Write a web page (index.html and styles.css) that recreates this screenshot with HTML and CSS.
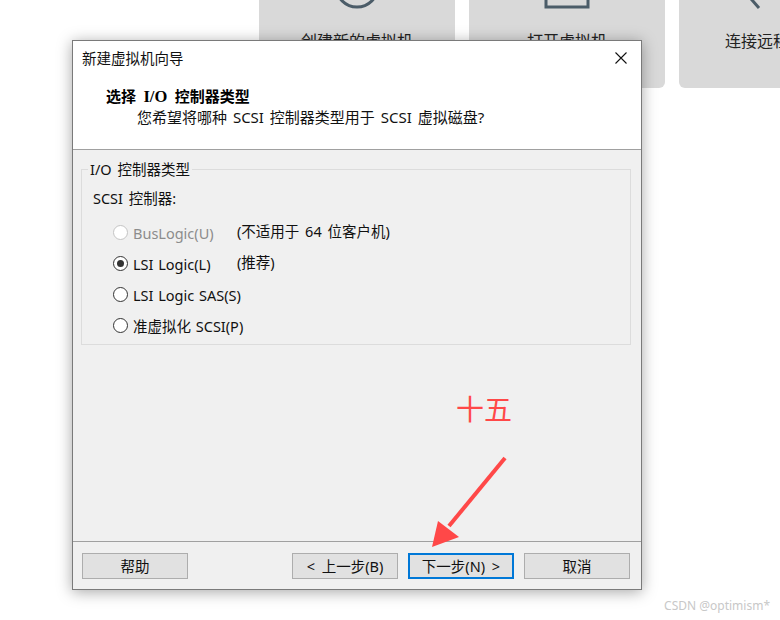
FILE: index.html
```html
<!DOCTYPE html>
<html lang="zh-CN">
<head>
<meta charset="utf-8">
<title>新建虚拟机向导</title>
<link rel="stylesheet" href="styles.css">
</head>
<body>
<div class="home">
  <div class="tile">
    <svg class="tile-icon" width="48" height="48" viewBox="0 0 48 48"><circle cx="24" cy="24" r="21" fill="none" stroke="#4b5c68" stroke-width="3"/></svg>
    <span class="tile-label">创建新的虚拟机</span>
  </div>
  <div class="tile">
    <svg class="tile-icon" width="48" height="48" viewBox="0 0 48 48"><rect x="3" y="3" width="42" height="42" fill="none" stroke="#4b5c68" stroke-width="3"/></svg>
    <span class="tile-label">打开虚拟机</span>
  </div>
  <div class="tile">
    <svg class="tile-icon" width="48" height="48" viewBox="0 0 48 48"><path d="M-8 30 L6 46" fill="none" stroke="#4b5c68" stroke-width="3"/></svg>
    <span class="tile-label">连接远程</span>
  </div>
</div>

<div class="dialog">
  <div class="titlebar">
    <span class="title">新建虚拟机向导</span>
    <svg class="close" width="12" height="12" viewBox="0 0 12 12"><path d="M0.5 0.5 L11.5 11.5 M11.5 0.5 L0.5 11.5" stroke="#111" stroke-width="1.1" fill="none"/></svg>
  </div>
  <div class="header">
    <div class="heading">选择 <span class="serif">I/O</span> 控制器类型</div>
    <div class="subtitle">您希望将哪种 SCSI 控制器类型用于 SCSI 虚拟磁盘?</div>
  </div>
  <div class="body">
    <fieldset class="group">
      <legend>I/O 控制器类型</legend>
      <div class="group-inner">
        <div class="caption">SCSI 控制器:</div>
        <div class="option disabled">
          <span class="radio"></span>
          <span class="opt-label">BusLogic(U)</span>
          <span class="opt-note">(不适用于 64 位客户机)</span>
        </div>
        <div class="option">
          <span class="radio checked"></span>
          <span class="opt-label">LSI Logic(L)</span>
          <span class="opt-note">(推荐)</span>
        </div>
        <div class="option">
          <span class="radio"></span>
          <span class="opt-label">LSI Logic SAS(S)</span>
        </div>
        <div class="option">
          <span class="radio"></span>
          <span class="opt-label">准虚拟化 SCSI(P)</span>
        </div>
      </div>
    </fieldset>
  </div>
  <div class="footer">
    <button class="btn">帮助</button>
    <span class="spacer"></span>
    <button class="btn">&lt; 上一步(B)</button>
    <button class="btn focused">下一步(N) &gt;</button>
    <button class="btn">取消</button>
  </div>
</div>

<div class="annotation">十五</div>
<svg class="arrow" width="90" height="100" viewBox="0 0 90 100">
  <path d="M80 8 L24 76" stroke="#ff4848" stroke-width="4" fill="none" stroke-linecap="butt"/>
  <path d="M7 97 L13 71 L34 87 Z" fill="#ff4848"/>
</svg>

<div class="watermark">CSDN @optimism*</div>
</body>
</html>
```

FILE: styles.css
```css
* { box-sizing: border-box; }

html, body {
  margin: 0;
  padding: 0;
}

body {
  width: 780px;
  height: 620px;
  overflow: hidden;
  background: #ffffff;
  position: relative;
  font-family: "Noto Sans", "Noto Sans CJK SC", sans-serif;
  color: #000;
}

/* background home tiles */
.home {
  display: flex;
  gap: 14px;
  margin-top: -110px;
  margin-left: 259px;
}

.tile {
  flex: 0 0 196px;
  height: 198px;
  background: #d9d9d9;
  border-radius: 6px;
  display: flex;
  flex-direction: column;
  align-items: center;
  justify-content: flex-end;
  padding-bottom: 38px;
}

.tile-icon {
  display: block;
  margin-bottom: 20px;
  overflow: visible;
}

.tile-label {
  font-family: "Noto Sans CJK SC", sans-serif;
  font-size: 16px;
  line-height: 20px;
  color: #222;
  white-space: nowrap;
}

.tile:last-child .tile-label {
  align-self: flex-start;
  margin-left: 46px;
}

/* dialog window */
.dialog {
  position: absolute;
  left: 72px;
  top: 40px;
  width: 570px;
  height: 550px;
  border: 1px solid #7a7a7a;
  background: #f0f0f0;
  box-shadow: 0 2px 14px rgba(0, 0, 0, 0.35);
  display: flex;
  flex-direction: column;
  font-family: "Noto Sans", "Noto Sans CJK SC", sans-serif;
  font-size: 14.5px;
}

.titlebar {
  height: 34px;
  background: #fff;
  display: flex;
  align-items: center;
  justify-content: space-between;
  padding: 0 14px 0 9px;
}

.title {
  font-family: "Noto Sans CJK SC", sans-serif;
  font-size: 14.5px;
  line-height: 20px;
  color: #111;
}

.close {
  display: block;
}

.header {
  height: 75px;
  background: #fff;
  border-bottom: 1px solid #a0a0a0;
  padding-top: 10px;
}

.heading {
  margin-left: 33px;
  font-family: "Noto Sans CJK SC", sans-serif;
  font-weight: 700;
  font-size: 15px;
  line-height: 21px;
  word-spacing: 4px;
}

.serif {
  font-family: "Liberation Serif", serif;
  font-size: 16.5px;
}

.subtitle {
  margin-left: 64px;
  font-size: 15px;
  line-height: 21px;
  word-spacing: 2px;
  color: #111;
}

.body {
  flex: 1;
  padding: 9px 10px 0 8px;
}

.group {
  margin: 0;
  border: 1px solid #dcdcdc;
  padding: 0 8px 3px 6px;
  min-width: 0;
}

.group legend {
  padding: 0 2px;
  font-size: 14.5px;
  line-height: 20px;
  word-spacing: 2px;
  color: #111;
}

.group-inner {
  padding-top: 9px;
}

.caption {
  margin-left: 5px;
  line-height: 20px;
  margin-bottom: 9px;
  word-spacing: 2px;
  color: #111;
}

.option {
  display: flex;
  align-items: center;
  height: 31px;
  padding-left: 25px;
  color: #111;
}

.radio {
  flex: 0 0 15px;
  width: 15px;
  height: 15px;
  border: 1px solid #333;
  border-radius: 50%;
  background: #fff;
  margin-right: 5px;
  display: flex;
  align-items: center;
  justify-content: center;
}

.radio.checked::after {
  content: "";
  width: 7px;
  height: 7px;
  border-radius: 50%;
  background: #333;
}

.opt-label {
  width: 104px;
  white-space: nowrap;
  word-spacing: 1px;
}

.opt-note {
  white-space: nowrap;
  margin-top: -4px;
  word-spacing: 2px;
}

.option.disabled {
  color: #8c8c8c;
}

.option.disabled .radio {
  border-color: #c4c4c4;
}

.option.disabled .opt-note {
  color: #111;
}

.footer {
  height: 48px;
  border-top: 1px solid #a0a0a0;
  display: flex;
  align-items: flex-start;
  padding: 11px 11px 0 9px;
  gap: 10px;
}

.spacer {
  flex: 1;
}

.btn {
  width: 106px;
  height: 26px;
  background: #e1e1e1;
  border: 1px solid #adadad;
  font-family: "Noto Sans", "Noto Sans CJK SC", sans-serif;
  font-size: 14.5px;
  line-height: 22px;
  word-spacing: 3px;
  color: #111;
  padding: 0;
}

.btn.focused {
  border: 2px solid #0078d7;
  line-height: 20px;
}

/* annotation overlay */
.annotation {
  position: absolute;
  left: 456px;
  top: 391px;
  font-family: "Noto Sans CJK SC", sans-serif;
  font-size: 28px;
  line-height: 34px;
  color: #ff4848;
}

.arrow {
  position: absolute;
  left: 425px;
  top: 450px;
}

.watermark {
  position: absolute;
  right: 10px;
  bottom: 6px;
  font-family: "Noto Sans", sans-serif;
  font-size: 12px;
  line-height: 16px;
  color: #c8c8c8;
}
```
